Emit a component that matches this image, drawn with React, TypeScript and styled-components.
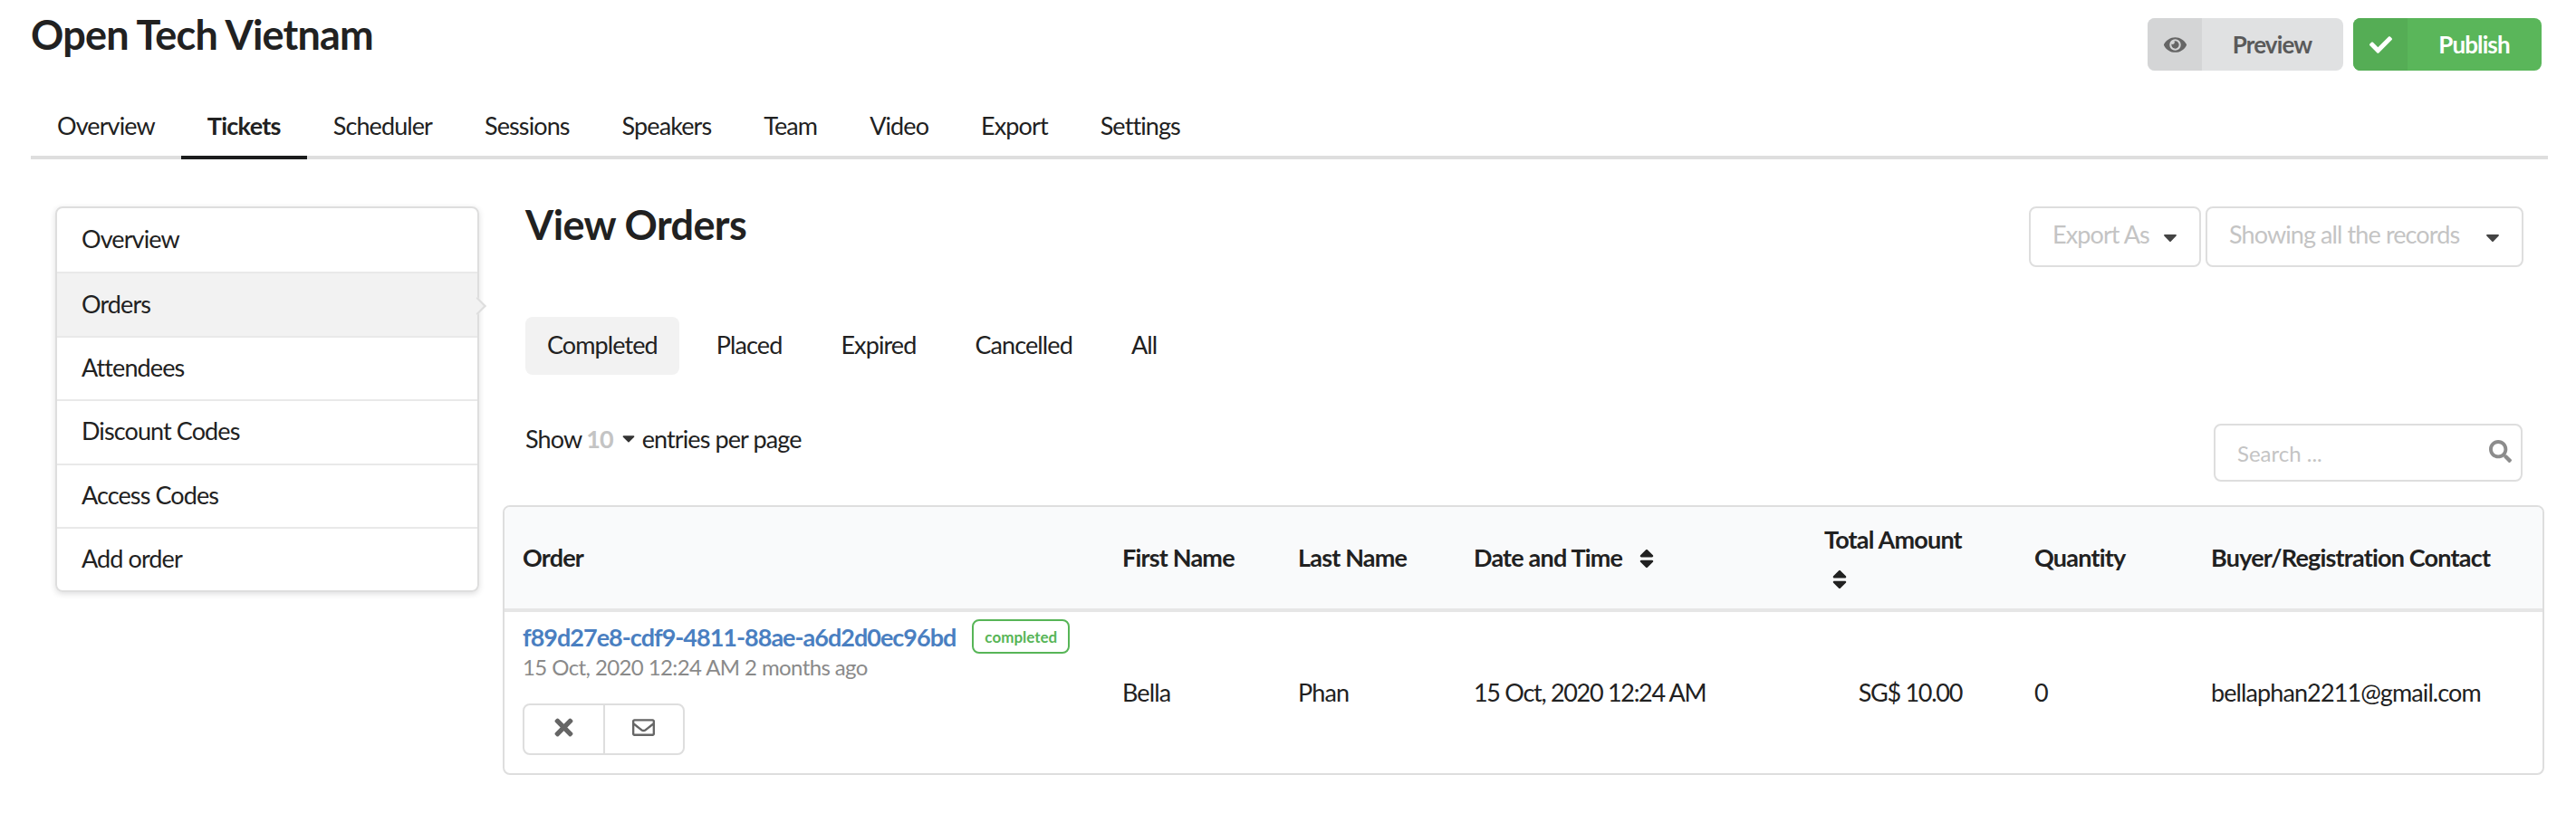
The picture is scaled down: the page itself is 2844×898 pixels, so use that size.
import { FC } from "react";
import styled, { createGlobalStyle } from "styled-components";
import { FaCaretDown, FaCheck, FaEye, FaRegEnvelope, FaSearch, FaSort, FaTimes } from "react-icons/fa";

const GlobalStyle = createGlobalStyle`
  html, body {
    margin: 0;
    padding: 0;
    background: #fff;
  }
  body {
    font-family: Lato, "Liberation Sans", sans-serif;
    font-size: 27px;
    letter-spacing: -0.9px;
    color: #212121;
  }
  * {
    box-sizing: border-box;
  }
`;

const Page = styled.div`
  width: 2844px;
  height: 898px;
  padding: 0 31px 0 34px;
  overflow: hidden;
`;

const TopRow = styled.header`
  display: flex;
  justify-content: space-between;
  height: 104px;
  padding-right: 7px;
`;

const EventTitle = styled.h1`
  margin: 13px 0 0;
  font-size: 45px;
  line-height: 50px;
  letter-spacing: -0.8px;
  font-weight: 700;
`;

const TopActions = styled.div`
  display: flex;
  gap: 11px;
  margin-top: 20px;
`;

const LabeledButton = styled.button<{ $width: number; $bg: string; $labelBg: string; $color: string; $iconColor: string }>`
  display: flex;
  align-items: stretch;
  width: ${(p) => p.$width}px;
  height: 58px;
  padding: 0;
  border: 0;
  border-radius: 8px;
  overflow: hidden;
  font: 700 26px Lato, sans-serif;
  letter-spacing: -0.9px;
  background: ${(p) => p.$bg};
  color: ${(p) => p.$color};

  > i {
    display: flex;
    align-items: center;
    justify-content: center;
    width: 60px;
    background: ${(p) => p.$labelBg};
    color: ${(p) => p.$iconColor};
    font-size: 25px;
  }

  > span {
    flex: 1;
    align-self: center;
    padding-right: 1px;
  }
`;

const NavTabs = styled.nav`
  display: flex;
  height: 72px;
  border-bottom: 4px solid #dedede;
`;

const NavTab = styled.a<{ $active?: boolean }>`
  display: flex;
  align-items: center;
  height: 72px;
  padding: 0 29px;
  margin-bottom: -4px;
  font-weight: ${(p) => (p.$active ? 700 : 400)};
  letter-spacing: ${(p) => (p.$active ? "-0.7px" : "-0.9px")};
  border-bottom: 4px solid ${(p) => (p.$active ? "#1b1c1d" : "transparent")};
`;

const Main = styled.main`
  display: flex;
  gap: 26px;
  padding: 52px 4px 0 27px;
`;

const SideMenu = styled.aside`
  flex: none;
  width: 468px;
  height: 426px;
  border: 2px solid #dedede;
  border-radius: 8px;
  box-shadow: 0 2px 6px rgba(34, 36, 38, 0.15);
`;

const SideItem = styled.a<{ $active?: boolean }>`
  position: relative;
  display: flex;
  align-items: center;
  height: 70.4px;
  padding: 0 0 3px 27px;
  background: ${(p) => (p.$active ? "#f2f2f2" : "transparent")};
  border-top: 2px solid #e9e9e9;

  &:first-child {
    border-top: 0;
  }

  ${(p) =>
    p.$active &&
    `
    &::after {
      content: "";
      position: absolute;
      top: 50%;
      right: -7px;
      width: 12px;
      height: 12px;
      margin-top: -6px;
      background: #f2f2f2;
      border-top: 2px solid #dedede;
      border-right: 2px solid #dedede;
      transform: rotate(45deg);
    }
  `}
`;

const Content = styled.section`
  flex: 1;
  min-width: 0;
`;

const HeadingRow = styled.div`
  display: flex;
  justify-content: space-between;
  padding: 0 23px 0 25px;
`;

const PageHeading = styled.h2`
  margin: 0;
  font-size: 45px;
  line-height: 40px;
  letter-spacing: -0.6px;
  font-weight: 700;
`;

const Filters = styled.div`
  display: flex;
  gap: 5px;
`;

const Dropdown = styled.div<{ $width: number }>`
  display: flex;
  align-items: center;
  justify-content: space-between;
  width: ${(p) => p.$width}px;
  height: 67px;
  padding: 0 20px 6px 24px;
  border: 2px solid #dedede;
  border-radius: 8px;
  color: #c4c4c4;

  svg {
    margin-top: 6px;
    color: #444;
    font-size: 24px;
  }
`;

const StateTabs = styled.div`
  display: flex;
  margin: 55px 0 0 25px;
`;

const StateTab = styled.a<{ $active?: boolean }>`
  display: flex;
  align-items: center;
  height: 64px;
  padding: 0 24px 4px;
  margin-right: 17px;
  border-radius: 8px;
  letter-spacing: -0.9px;
  background: ${(p) => (p.$active ? "#f2f2f2" : "transparent")};
`;

const ToolRow = styled.div`
  display: flex;
  justify-content: space-between;
  height: 64px;
  margin-top: 54px;
  padding: 0 24px 0 25px;
`;

const PageSize = styled.div`
  display: flex;
  align-items: center;
  height: 32px;

  b {
    margin-left: 5px;
    font-weight: 700;
    color: #c4c4c4;
  }

  svg {
    margin: 0 4px 0 6px;
    font-size: 22px;
    color: #333;
  }
`;

const SearchBox = styled.div`
  display: flex;
  align-items: center;
  justify-content: space-between;
  width: 341px;
  height: 64px;
  padding: 0 10px 0 24px;
  border: 2px solid #dedede;
  border-radius: 8px;
  font-size: 24px;
  letter-spacing: 0;
  color: #c4c4c4;

  svg {
    margin-bottom: 4px;
    color: #8c8c8c;
    font-size: 25px;
  }
`;

const TableFrame = styled.div`
  margin-top: 26px;
  border: 2px solid #dedede;
  border-radius: 8px;
  overflow: hidden;
`;

const OrdersTable = styled.table`
  width: 100%;
  table-layout: fixed;
  border-collapse: collapse;
`;

const HeadCell = styled.th<{ $width: number }>`
  width: ${(p) => p.$width}px;
  height: 114px;
  padding: 0 0 0 20px;
  text-align: left;
  vertical-align: middle;
  font-size: 27px;
  line-height: 34px;
  letter-spacing: -0.8px;
  font-weight: 700;
  background: #f9fafb;
  border-bottom: 4px solid #e6e6e6;

  svg {
    margin-left: 8px;
    font-size: 26px;
    vertical-align: -4px;
  }
`;

const SortLine = styled.div`
  margin-top: 12px;
  height: 28px;
  line-height: 28px;

  svg {
    margin-left: 4px;
  }
`;

const BodyCell = styled.td<{ $right?: boolean; $numeric?: boolean }>`
  padding: 0 ${(p) => (p.$right ? "60px" : "0")} 2px 20px;
  height: 180px;
  text-align: ${(p) => (p.$right ? "right" : "left")};
  letter-spacing: ${(p) => (p.$numeric ? "-1.3px" : "-0.9px")};
  vertical-align: middle;
`;

const OrderCell = styled.td`
  padding: 8px 0 0 20px;
  vertical-align: top;
`;

const OrderLine = styled.div`
  display: flex;
  align-items: center;
  gap: 18px;
`;

const OrderLink = styled.a`
  font-size: 27px;
  font-weight: 700;
  letter-spacing: -1px;
  color: #4a7fc1;
`;

const StatusBadge = styled.span`
  display: flex;
  align-items: center;
  justify-content: center;
  width: 108px;
  height: 38px;
  border: 2px solid #57b557;
  border-radius: 8px;
  font-size: 17px;
  letter-spacing: 0;
  font-weight: 700;
  color: #57b557;
`;

const OrderDate = styled.div`
  margin-top: -1px;
  font-size: 24px;
  line-height: 32px;
  letter-spacing: -0.6px;
  color: #8a8a8a;
`;

const ActionGroup = styled.div`
  display: flex;
  width: 179px;
  height: 57px;
  margin-top: 24px;
  border: 2px solid #dedede;
  border-radius: 8px;
`;

const ActionButton = styled.button`
  flex: 1;
  display: flex;
  align-items: center;
  justify-content: center;
  padding: 0 0 4px;
  border: 0;
  background: transparent;
  color: #666;
  font-size: 25px;

  & + & {
    border-left: 2px solid #dedede;
  }
`;

const CloseIcon = styled(FaTimes)`
  font-size: 29px;
`;

const navItems = ["Overview", "Tickets", "Scheduler", "Sessions", "Speakers", "Team", "Video", "Export", "Settings"];
const sideItems = ["Overview", "Orders", "Attendees", "Discount Codes", "Access Codes", "Add order"];
const orderStates = ["Completed", "Placed", "Expired", "Cancelled", "All"];

const App: FC = () => {
  return (
    <Page>
      <GlobalStyle />
      <TopRow>
        <EventTitle>Open Tech Vietnam</EventTitle>
        <TopActions>
          <LabeledButton $width={216} $bg="#e0e1e2" $labelBg="#d4d5d6" $color="#5a5a5a" $iconColor="#666">
            <i><FaEye /></i>
            <span>Preview</span>
          </LabeledButton>
          <LabeledButton $width={208} $bg="#5ab65a" $labelBg="#55ad55" $color="#fff" $iconColor="#fff">
            <i><FaCheck /></i>
            <span>Publish</span>
          </LabeledButton>
        </TopActions>
      </TopRow>
      <NavTabs>
        {navItems.map((item) => (
          <NavTab key={item} $active={item === "Tickets"}>{item}</NavTab>
        ))}
      </NavTabs>
      <Main>
        <SideMenu>
          {sideItems.map((item) => (
            <SideItem key={item} $active={item === "Orders"}>{item}</SideItem>
          ))}
        </SideMenu>
        <Content>
          <HeadingRow>
            <PageHeading>View Orders</PageHeading>
            <Filters>
              <Dropdown $width={190}>Export As <FaCaretDown /></Dropdown>
              <Dropdown $width={351}>Showing all the records <FaCaretDown /></Dropdown>
            </Filters>
          </HeadingRow>
          <StateTabs>
            {orderStates.map((state) => (
              <StateTab key={state} $active={state === "Completed"}>{state}</StateTab>
            ))}
          </StateTabs>
          <ToolRow>
            <PageSize>Show <b>10</b> <FaCaretDown /> entries per page</PageSize>
            <SearchBox>Search ... <FaSearch /></SearchBox>
          </ToolRow>
          <TableFrame>
            <OrdersTable>
              <thead>
                <tr>
                  <HeadCell $width={662}>Order</HeadCell>
                  <HeadCell $width={194}>First Name</HeadCell>
                  <HeadCell $width={194}>Last Name</HeadCell>
                  <HeadCell $width={387}>Date and Time <FaSort /></HeadCell>
                  <HeadCell $width={232}>
                    Total Amount
                    <SortLine><FaSort /></SortLine>
                  </HeadCell>
                  <HeadCell $width={195}>Quantity</HeadCell>
                  <HeadCell $width={390}>Buyer/Registration Contact</HeadCell>
                </tr>
              </thead>
              <tbody>
                <tr>
                  <OrderCell>
                    <OrderLine>
                      <OrderLink>f89d27e8-cdf9-4811-88ae-a6d2d0ec96bd</OrderLink>
                      <StatusBadge>completed</StatusBadge>
                    </OrderLine>
                    <OrderDate>15 Oct, 2020 12:24 AM 2 months ago</OrderDate>
                    <ActionGroup>
                      <ActionButton><CloseIcon /></ActionButton>
                      <ActionButton><FaRegEnvelope /></ActionButton>
                    </ActionGroup>
                  </OrderCell>
                  <BodyCell>Bella</BodyCell>
                  <BodyCell>Phan</BodyCell>
                  <BodyCell $numeric>15 Oct, 2020 12:24 AM</BodyCell>
                  <BodyCell $right $numeric>SG$ 10.00</BodyCell>
                  <BodyCell>0</BodyCell>
                  <BodyCell>bellaphan2211@gmail.com</BodyCell>
                </tr>
              </tbody>
            </OrdersTable>
          </TableFrame>
        </Content>
      </Main>
    </Page>
  );
};

export default App;
